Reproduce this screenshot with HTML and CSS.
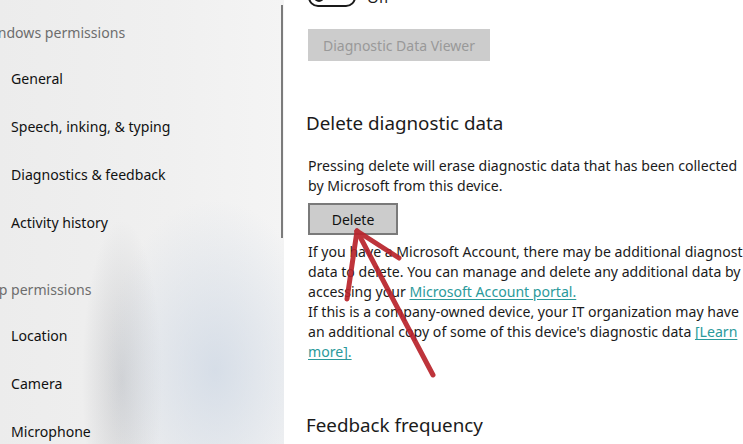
FILE: index.html
```html
<!DOCTYPE html>
<html lang="en">
<head>
<meta charset="utf-8">
<title>Diagnostics &amp; feedback</title>
<link rel="stylesheet" href="styles.css">
</head>
<body>
<div class="window">
  <aside class="sidebar">
    <nav class="nav">
      <div class="group-title">Windows permissions</div>
      <div class="nav-item">General</div>
      <div class="nav-item">Speech, inking, &amp; typing</div>
      <div class="nav-item">Diagnostics &amp; feedback</div>
      <div class="nav-item">Activity history</div>
      <div class="group-title second">App permissions</div>
      <div class="nav-item">Location</div>
      <div class="nav-item">Camera</div>
      <div class="nav-item">Microphone</div>
    </nav>
    <div class="scrollbar"><div class="thumb"></div></div>
  </aside>
  <main class="content">
    <div class="toggle-row">
      <span class="toggle"><span class="knob"></span></span>
      <span class="toggle-label">Off</span>
    </div>
    <button class="btn btn-disabled">Diagnostic Data Viewer</button>
    <h2 class="heading">Delete diagnostic data</h2>
    <p class="para first">Pressing delete will erase diagnostic data that has been collected<br>by Microsoft from this device.</p>
    <button class="btn btn-delete">Delete</button>
    <p class="para second">If you have a Microsoft Account, there may be additional diagnostic<br>data to delete. You can manage and delete any additional data by<br>accessing your <a class="link" href="#">Microsoft Account portal.</a><br>If this is a company-owned device, your IT organization may have<br>an additional copy of some of this device's diagnostic data <a class="link" href="#">[Learn<br>more].</a></p>
    <h2 class="heading feedback">Feedback frequency</h2>
  </main>
  <svg class="arrow" width="743" height="444" viewBox="0 0 743 444" aria-hidden="true">
    <g stroke="#b9232b" stroke-width="5" stroke-linecap="round" stroke-linejoin="round" fill="none" opacity="0.92">
      <line x1="433" y1="375" x2="357" y2="231"/>
      <line x1="357" y1="231" x2="347" y2="299"/>
      <line x1="357" y1="231" x2="399" y2="258"/>
    </g>
  </svg>
</div>
</body>
</html>
```
FILE: styles.css
```css
html, body {
  margin: 0;
  padding: 0;
  background: #ffffff;
}
body {
  width: 743px;
  height: 444px;
  overflow: hidden;
  font-family: "Noto Sans", "Open Sans", sans-serif;
  color: #1b1b1b;
}
.window {
  position: relative;
  display: flex;
  width: 743px;
  height: 444px;
  overflow: hidden;
}
.sidebar {
  width: 284px;
  flex: none;
  display: flex;
  background:
    radial-gradient(ellipse 110px 170px at 215px 370px, rgba(205, 215, 228, 0.75), rgba(205, 215, 228, 0) 100%),
    radial-gradient(ellipse 40px 160px at 122px 380px, rgba(188, 190, 194, 0.6), rgba(188, 190, 194, 0) 100%),
    linear-gradient(90deg, #ececec 0%, #f0f0f0 60%, #f4f4f4 100%);
}
.nav {
  width: 281px;
  flex: none;
  padding-top: 7px;
  overflow: hidden;
}
.group-title {
  height: 47px;
  box-sizing: border-box;
  padding-top: 4px;
  display: flex;
  align-items: center;
  margin-left: -19px;
  font-size: 14.1px;
  color: #6d6d6d;
  white-space: nowrap;
}
.group-title.second {
  margin-top: 18px;
}
.nav-item {
  height: 48px;
  display: flex;
  align-items: center;
  padding-left: 11px;
  font-size: 14.1px;
  color: #111111;
  white-space: nowrap;
}
.scrollbar {
  width: 3px;
  flex: none;
  padding-top: 5px;
}
.thumb {
  width: 2px;
  height: 233px;
  background: #7b7b7b;
}
.content {
  flex: 1;
  padding-left: 24px;
  display: flex;
  flex-direction: column;
  align-items: flex-start;
  white-space: nowrap;
}
.toggle-row {
  margin-top: -13px;
  height: 20px;
  display: flex;
  align-items: center;
  gap: 11px;
}
.toggle {
  width: 40px;
  height: 16px;
  border: 2px solid #1a1a1a;
  border-radius: 10px;
  display: flex;
  align-items: center;
  padding-left: 4px;
  box-sizing: content-box;
}
.knob {
  width: 10px;
  height: 10px;
  border-radius: 50%;
  background: #1a1a1a;
}
.toggle-label {
  font-size: 15px;
  color: #1b1b1b;
}
.btn {
  font-family: inherit;
  font-size: 14px;
  border: none;
  padding: 0;
  margin: 0;
}
.btn-disabled {
  margin-top: 22px;
  width: 182px;
  height: 32px;
  background: #cccccc;
  color: #999999;
}
.heading {
  margin: 48px 0 0 -2px;
  height: 28px;
  line-height: 28px;
  font-size: 18.8px;
  font-weight: normal;
  color: #1b1b1b;
}
.para {
  margin: 0;
  font-size: 14.1px;
  line-height: 20px;
  color: #1b1b1b;
}
.para.first {
  margin-top: 19px;
}
.btn-delete {
  margin-top: 7px;
  width: 90px;
  height: 32px;
  background: #cccccc;
  border: 2px solid #7a7a7a;
  color: #111111;
}
.para.second {
  margin-top: 7px;
}
.link {
  color: #2b9a9b;
  text-decoration: underline;
  text-underline-offset: 2px;
}
.heading.feedback {
  margin-top: 49px;
}
.arrow {
  position: absolute;
  left: 0;
  top: 0;
  pointer-events: none;
}
```
